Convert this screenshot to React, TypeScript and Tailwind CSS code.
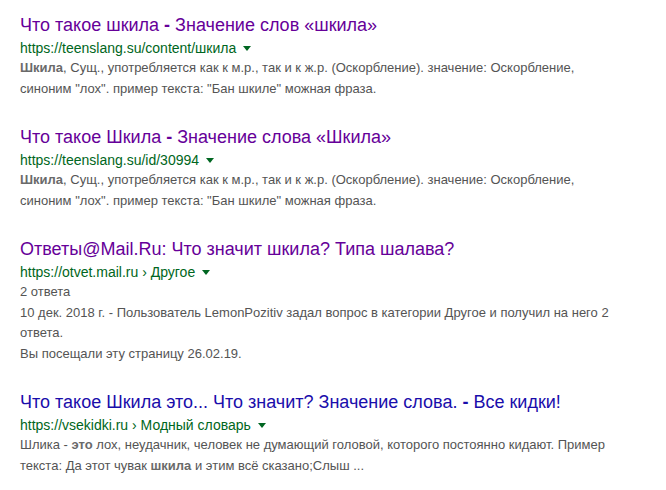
import React from "react";

const Arrow = () => (
  <span className="ml-[7px] inline-block h-0 w-0 border-x-[4px] border-t-[5px] border-x-transparent border-t-[#006621] align-[2px]" />
);

type R = {
  title: React.ReactNode;
  visited: boolean;
  url: React.ReactNode;
  lines: React.ReactNode[];
};

const results: R[] = [
  {
    title: (
      <>
        Что такое шкила <b>-</b> Значение слов «шкила»
      </>
    ),
    visited: true,
    url: "https://teenslang.su/content/шкила",
    lines: [
      <>
        <b className="text-[#6a6a6a]">Шкила</b>, Сущ., употребляется как к м.р., так и к ж.р. (Оскорбление). значение: Оскорбление,
        синоним "лох". пример текста: "Бан шкиле" можная фраза.
      </>,
    ],
  },
  {
    title: (
      <>
        Что такое Шкила <b>-</b> Значение слова «Шкила»
      </>
    ),
    visited: true,
    url: "https://teenslang.su/id/30994",
    lines: [
      <>
        <b className="text-[#6a6a6a]">Шкила</b>, Сущ., употребляется как к м.р., так и к ж.р. (Оскорбление). значение: Оскорбление,
        синоним "лох". пример текста: "Бан шкиле" можная фраза.
      </>,
    ],
  },
  {
    title: <>Ответы@Mail.Ru: Что значит шкила? Типа шалава?</>,
    visited: true,
    url: "https://otvet.mail.ru › Другое",
    lines: [
      <>2 ответа</>,
      <>
        10 дек. 2018 г. - Пользователь LemonPozitiv задал вопрос в категории Другое и получил на него 2
        ответа.
      </>,
      <>Вы посещали эту страницу 26.02.19.</>,
    ],
  },
  {
    title: (
      <>
        Что такое Шкила это... Что значит? Значение слова. <b>-</b> Все кидки!
      </>
    ),
    visited: false,
    url: "https://vsekidki.ru › Модный словарь",
    lines: [
      <>
        Шлика - <b className="text-[#6a6a6a]">это</b> лох, неудачник, человек не думающий головой, которого постоянно кидают. Пример
        текста: Да этот чувак <b className="text-[#6a6a6a]">шкила</b> и этим всё сказано;Слыш ...
      </>,
    ],
  },
];

export default function App() {
  return (
    <div className="h-[490px] w-[666px] bg-white pl-[20px] pt-[13px] font-['Arial','Liberation_Sans',sans-serif]">
      <div className="flex w-[600px] flex-col gap-[26px]">
        {results.map((r, i) => (
          <div key={i} className="flex flex-col">
            <div
              className={`text-[18px] leading-[24px] whitespace-nowrap ${
                r.visited ? "text-[#660099]" : "text-[#1a0dab]"
              }`}
            >
              {r.title}
            </div>
            <div className="mt-[2px] text-[14px] leading-[18px] text-[#006621] whitespace-nowrap">
              {r.url}
              <Arrow />
            </div>
            <div className="mt-[1px] flex flex-col text-[13px] leading-[20.5px] text-[#545454]">
              {r.lines.map((l, j) => (
                <div key={j}>{l}</div>
              ))}
            </div>
          </div>
        ))}
      </div>
    </div>
  );
}
